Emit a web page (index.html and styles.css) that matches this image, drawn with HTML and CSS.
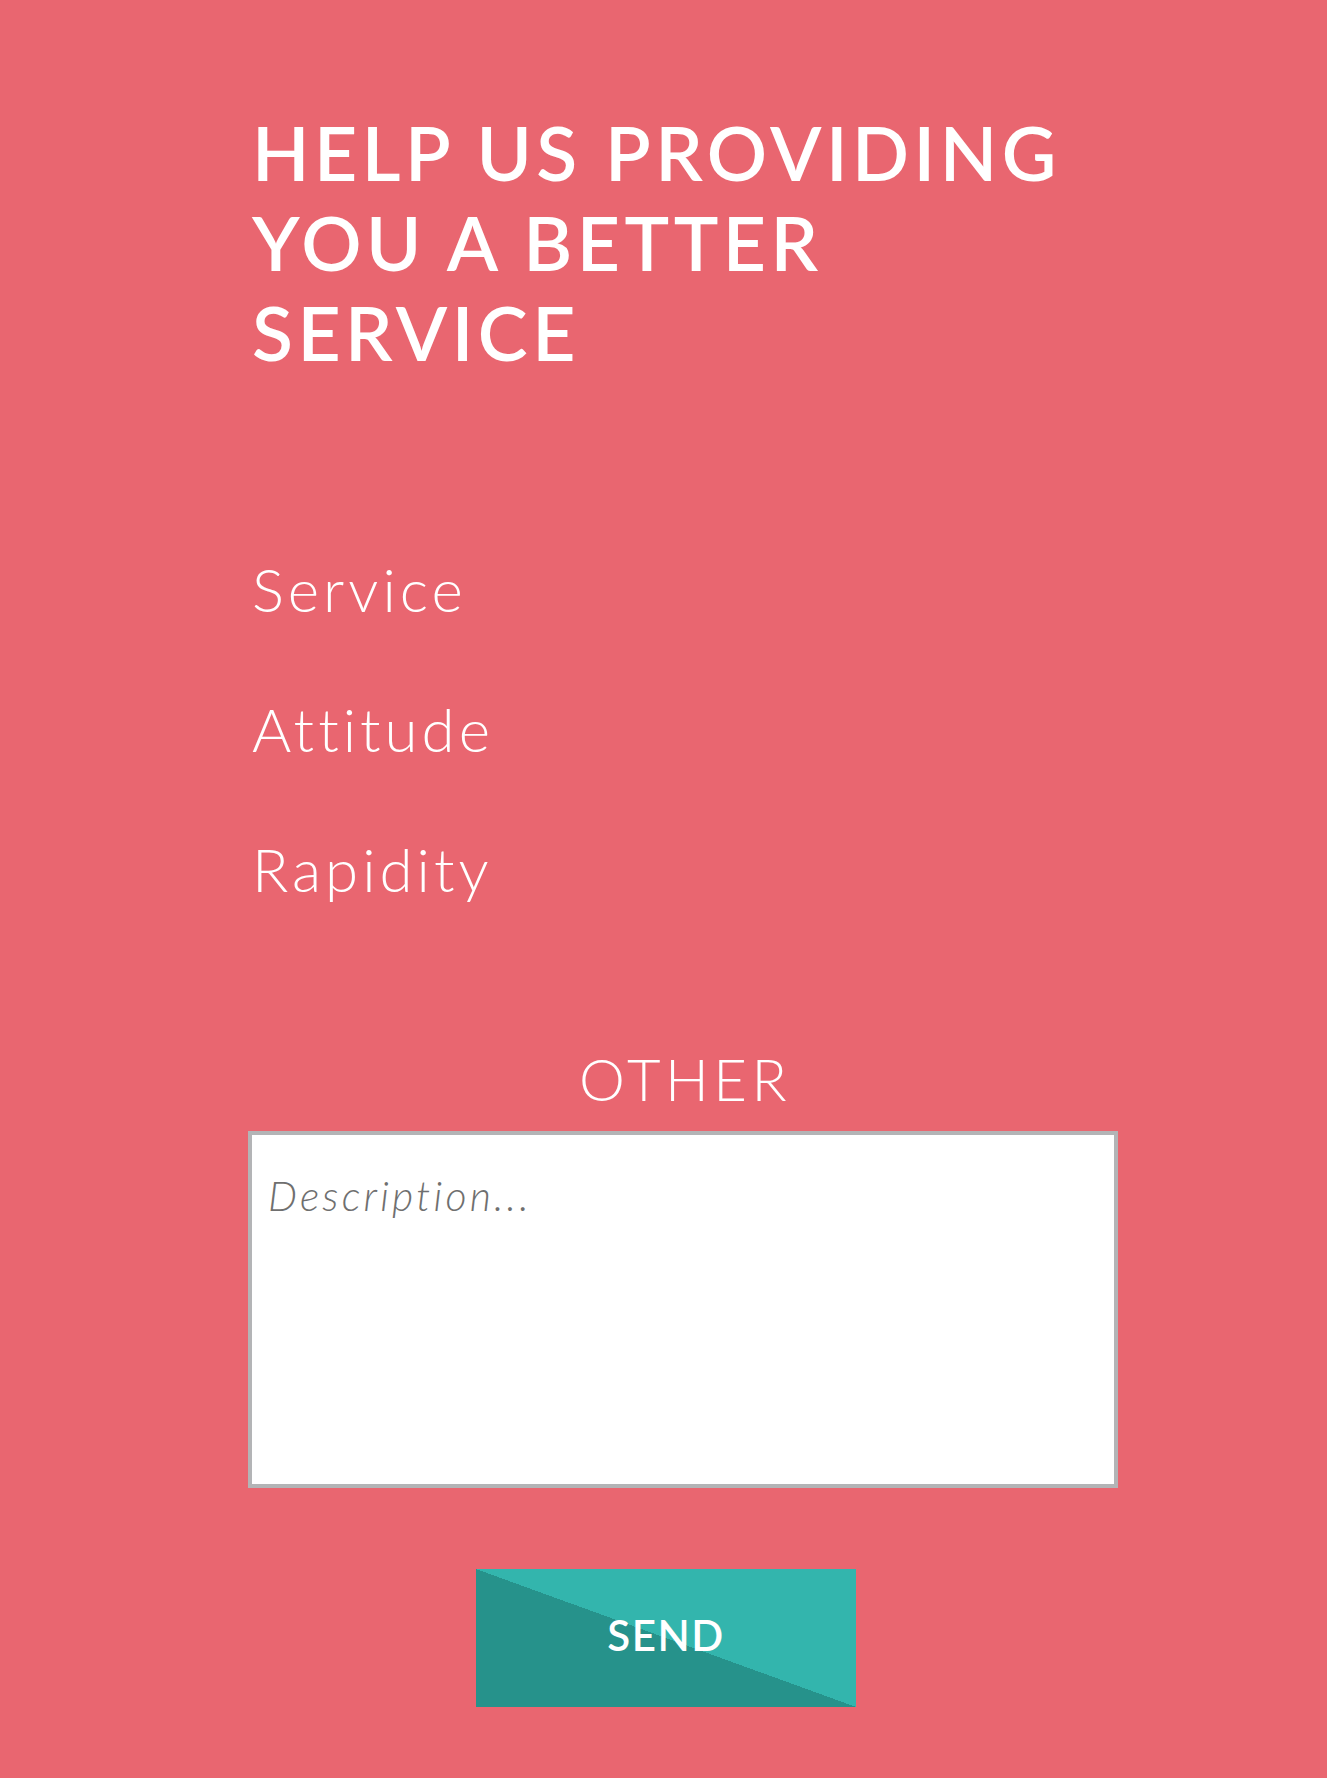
FILE: index.html
```html
<!DOCTYPE html>
<html lang="en">
<head>
<meta charset="utf-8">
<title>Feedback</title>
<link rel="stylesheet" href="styles.css">
</head>
<body>
<main class="page">
  <form class="feedback">
    <h1 class="title">HELP US PROVIDING<br>YOU A BETTER<br>SERVICE</h1>
    <ul class="criteria">
      <li class="criterion">Service</li>
      <li class="criterion">Attitude</li>
      <li class="criterion">Rapidity</li>
    </ul>
    <h2 class="other-label">OTHER</h2>
    <textarea class="description" placeholder="Description..."></textarea>
    <div class="actions">
      <button type="button" class="send">SEND</button>
    </div>
  </form>
</main>
</body>
</html>
```
FILE: styles.css
```css
html, body {
  margin: 0;
  padding: 0;
}
body {
  background: #e96670;
  color: #ffffff;
  font-family: "Lato", "Open Sans", sans-serif;
  font-variant-ligatures: none;
  min-height: 1778px;
}
.page {
  padding-top: 107px;
  padding-left: 248px;
}
.feedback {
  width: 870px;
  display: flex;
  flex-direction: column;
}
.title {
  margin: 0 0 0 4px;
  font-size: 75px;
  line-height: 90px;
  font-weight: 600;
  letter-spacing: 4.5px;
}
.criteria {
  list-style: none;
  margin: 142px 0 0 0;
  padding: 0;
}
.criterion {
  font-size: 60px;
  line-height: 140px;
  font-weight: 300;
  letter-spacing: 4px;
  padding-left: 4px;
}
.other-label {
  margin: 105px 0 0 0;
  text-align: center;
  font-size: 58px;
  line-height: 70px;
  font-weight: 300;
  letter-spacing: 4.5px;
  padding-left: 4px;
}
.description {
  margin-top: 17px;
  box-sizing: border-box;
  width: 870px;
  height: 357px;
  border: 4px solid #b3b4b6;
  border-radius: 0;
  background: #ffffff;
  padding: 36px 16px 16px 16px;
  font-family: "Lato", "Open Sans", sans-serif;
  font-variant-ligatures: none;
  font-size: 41px;
  font-style: italic;
  font-weight: 300;
  letter-spacing: 3.2px;
  color: #555555;
  resize: none;
  outline: none;
}
.description::placeholder {
  color: #6f6f6f;
  opacity: 1;
}
.actions {
  margin-top: 81px;
  padding-left: 228px;
}
.send {
  width: 380px;
  height: 138px;
  border: 0;
  padding: 0 0 6px 0;
  background: linear-gradient(to top right, #26928b 50%, #33b5ad 50%);
  color: #ffffff;
  font-family: "Lato", "Open Sans", sans-serif;
  font-size: 42px;
  font-weight: 600;
  letter-spacing: 1.5px;
  cursor: pointer;
}
```
